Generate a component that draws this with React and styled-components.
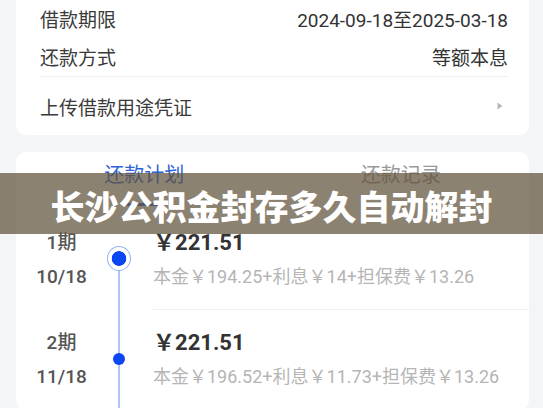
import React from 'react';
import styled, { createGlobalStyle, css } from 'styled-components';

const GlobalStyle = createGlobalStyle`
  html, body {
    margin: 0;
    padding: 0;
    background: #f4f5f7;
  }
  body {
    font-family: Roboto, "Noto Sans CJK SC", sans-serif;
    color: #333;
  }
`;

const Page = styled.div`
  position: relative;
  width: 543px;
  height: 408px;
  overflow: hidden;
  box-sizing: border-box;
  padding: 0 14px 0 16px;
  display: flex;
  flex-direction: column;
  gap: 17px;
`;

const Card = styled.div`
  background: #fff;
  border-radius: ${(p) => (p.$cutTop ? '0 0 10px 10px' : '10px')};
  flex-shrink: 0;
`;

const InfoCard = styled(Card)`
  padding: 0 21px 0 24px;
`;

const InfoRow = styled.div`
  display: flex;
  align-items: center;
  justify-content: space-between;
  height: ${(p) => p.$h}px;
  font-size: 19px;
  color: #3a3a3a;
  ${(p) => p.$divided && css`border-top: 1px solid #eeeff1;`}
`;

const Value = styled.span`
  color: #333;
`;

const Arrow = styled.svg`
  width: 6px;
  height: 8px;
  margin-right: 5px;
`;

const Tabs = styled.div`
  display: grid;
  grid-template-columns: 1fr 1fr;
  height: 58px;
`;

const Tab = styled.div`
  display: flex;
  flex-direction: column;
  align-items: center;
  padding-top: 11px;
  font-size: 20px;
  line-height: 24px;
  color: ${(p) => (p.$active ? '#2f62d8' : '#999')};
`;

const TabLine = styled.span`
  width: 36px;
  height: 3px;
  margin-top: 16px;
  border-radius: 2px;
  background: #2f62d8;
`;

const Item = styled.div`
  display: grid;
  grid-template-columns: 91px 24px 1fr;
`;

const Period = styled.div`
  padding: 16px 0 15px;
  text-align: center;
  font-size: 19px;
  line-height: 34px;
  font-weight: 500;
  color: #555;
`;

const Track = styled.div`
  display: flex;
  align-items: center;
  justify-content: center;
  padding-bottom: 3px;
  background: linear-gradient(#abc5f5, #abc5f5) no-repeat;
  background-size: 2px ${(p) => (p.$first ? '50%' : '100%')};
  background-position: center bottom;
`;

const Node = styled.span`
  box-sizing: border-box;
  border-radius: 50%;
  ${(p) =>
    p.$active
      ? css`
          width: 25px;
          height: 25px;
          border: 1.5px solid #8fb0f2;
          background: radial-gradient(circle, #0a46f2 0 7px, #fff 7.6px);
        `
      : css`
          width: 12px;
          height: 12px;
          background: #0a46f2;
        `}
`;

const Detail = styled.div`
  margin-left: 22px;
  padding: 16px 0 15px;
  border-bottom: 1px solid #eeeff1;
  line-height: 34px;
`;

const Price = styled.div`
  font-size: 22px;
  font-weight: 700;
  color: #333;
`;

const Breakdown = styled.div`
  font-size: 18px;
  color: #b5b5b5;
  white-space: nowrap;
`;

const Banner = styled.div`
  position: absolute;
  left: 0;
  right: 0;
  top: 173px;
  height: 61px;
  padding-top: 4px;
  box-sizing: border-box;
  display: flex;
  align-items: center;
  justify-content: center;
  background: rgba(95, 82, 58, 0.72);
  color: #fff;
  font-family: "Noto Sans CJK SC", sans-serif;
  font-size: 34px;
  font-weight: 900;
`;

const schedule = [
  { period: '1期', date: '10/18', total: '221.51', principal: '194.25', interest: '14', fee: '13.26' },
  { period: '2期', date: '11/18', total: '221.51', principal: '196.52', interest: '11.73', fee: '13.26' },
];

const App = () => (
  <>
    <GlobalStyle />
    <Page>
      <InfoCard $cutTop>
        <InfoRow $h={36}>
          <span>借款期限</span>
          <Value>2024-09-18至2025-03-18</Value>
        </InfoRow>
        <InfoRow $h={40}>
          <span>还款方式</span>
          <Value>等额本息</Value>
        </InfoRow>
        <InfoRow $h={58} $divided>
          <span>上传借款用途凭证</span>
          <Arrow viewBox="0 0 6 8">
            <path d="M0.5 0.5 L5.5 4 L0.5 7.5 Z" fill="#b8b8bc" />
          </Arrow>
        </InfoRow>
      </InfoCard>

      <Card>
        <Tabs>
          <Tab $active>
            还款计划
            <TabLine />
          </Tab>
          <Tab>还款记录</Tab>
        </Tabs>
        {schedule.map((row, i) => (
          <Item key={row.period}>
            <Period>
              <div>{row.period}</div>
              <div>{row.date}</div>
            </Period>
            <Track $first={i === 0}>
              <Node $active={i === 0} />
            </Track>
            <Detail>
              <Price>￥{row.total}</Price>
              <Breakdown>
                本金￥{row.principal}+利息￥{row.interest}+担保费￥{row.fee}
              </Breakdown>
            </Detail>
          </Item>
        ))}
      </Card>

      <Banner>长沙公积金封存多久自动解封</Banner>
    </Page>
  </>
);

export default App;
